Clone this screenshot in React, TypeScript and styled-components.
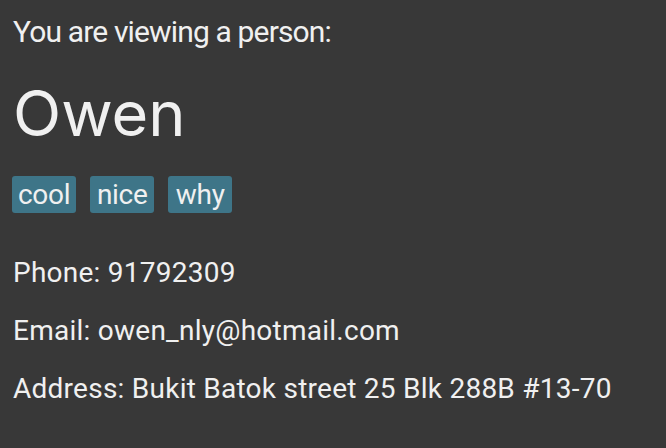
import React from "react";
import styled, { createGlobalStyle } from "styled-components";

const Global = createGlobalStyle`
  html, body { margin: 0; padding: 0; background: #383838; }
  body { font-family: Roboto, "Noto Sans", sans-serif; color: #f0f0f0; }
`;

const Page = styled.div`
  width: 666px;
  height: 448px;
  box-sizing: border-box;
  padding: 14px 13px 0 13px;
  display: flex;
  flex-direction: column;
  background: #383838;
  overflow: hidden;
`;

const Intro = styled.div`
  font-size: 30px;
  line-height: 36px;
  letter-spacing: -0.85px;
`;

const Name = styled.div`
  font-family: Inter, Roboto, sans-serif;
  font-size: 63px;
  line-height: 76px;
  margin-top: 25px;
`;

const Tags = styled.div`
  display: flex;
  gap: 14px;
  margin-top: 25px;
  margin-left: -1px;
`;

const Tag = styled.span`
  background: #3e7588;
  border-radius: 3px;
  padding: 0 6px;
  min-width: 52px;
  text-align: center;
  height: 37px;
  line-height: 37px;
  font-size: 28px;
  letter-spacing: -0.3px;
  color: #f0f0f0;
`;

const Fields = styled.div`
  display: flex;
  flex-direction: column;
  margin-top: 42px;
  gap: 22px;
`;

const Field = styled.div`
  font-size: 28px;
  line-height: 36px;
  letter-spacing: 0.25px;
`;

export default function App() {
  return (
    <>
      <Global />
      <Page>
        <Intro>You are viewing a person:</Intro>
        <Name>Owen</Name>
        <Tags>
          <Tag>cool</Tag>
          <Tag>nice</Tag>
          <Tag>why</Tag>
        </Tags>
        <Fields>
          <Field>Phone: 91792309</Field>
          <Field>Email: owen_nly@hotmail.com</Field>
          <Field>Address: Bukit Batok street 25 Blk 288B #13-70</Field>
        </Fields>
      </Page>
    </>
  );
}
